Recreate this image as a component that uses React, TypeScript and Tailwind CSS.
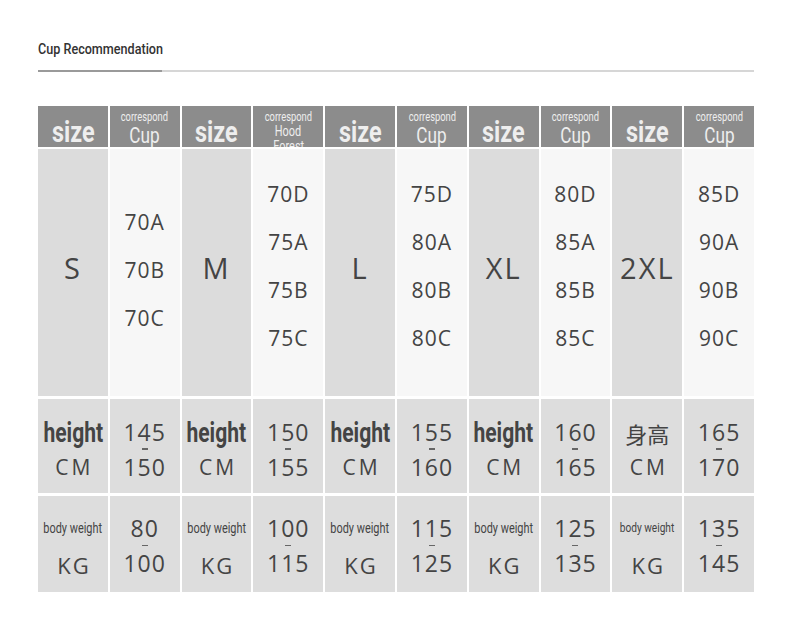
import React from 'react'

const roboto = '"Roboto", "Liberation Sans", sans-serif'
const plain = '"Open Sans", "Noto Sans", "Noto Sans CJK SC", sans-serif'

interface SizeGroup {
  size: string
  cupLabel: string[]
  cups: string[]
  heightLabel: string
  height: [string, string]
  weight: [string, string]
}

const groups: SizeGroup[] = [
  { size: 'S', cupLabel: ['Cup'], cups: ['70A', '70B', '70C'], heightLabel: 'height', height: ['145', '150'], weight: ['80', '100'] },
  { size: 'M', cupLabel: ['Hood', 'Forest'], cups: ['70D', '75A', '75B', '75C'], heightLabel: 'height', height: ['150', '155'], weight: ['100', '115'] },
  { size: 'L', cupLabel: ['Cup'], cups: ['75D', '80A', '80B', '80C'], heightLabel: 'height', height: ['155', '160'], weight: ['115', '125'] },
  { size: 'XL', cupLabel: ['Cup'], cups: ['80D', '85A', '85B', '85C'], heightLabel: 'height', height: ['160', '165'], weight: ['125', '135'] },
  { size: '2XL', cupLabel: ['Cup'], cups: ['85D', '90A', '90B', '90C'], heightLabel: '身高', height: ['165', '170'], weight: ['135', '145'] },
]

// condensed look: no narrow family installed, so squeeze Roboto horizontally
function Narrow({ className, children }: { className: string; children: React.ReactNode }) {
  return (
    <span className={`inline-block whitespace-nowrap scale-x-[0.78] ${className}`} style={{ fontFamily: roboto }}>
      {children}
    </span>
  )
}

function Range({ pair }: { pair: [string, string] }) {
  return (
    <div className="flex flex-col items-center text-[23px] leading-[24px] text-[#444] tracking-[1px]" style={{ fontFamily: plain }}>
      <span>{pair[0]}</span>
      <span className="h-[11px] flex items-center">
        <span className="block w-[6px] h-[1.5px] bg-[#666]" />
      </span>
      <span>{pair[1]}</span>
    </div>
  )
}

export default function App() {
  return (
    <div className="w-[790px] h-[634px] bg-white">
      <div className="pl-[38px] pr-[36px] pt-[39px]">
        <div className="h-[20px] flex items-center">
          <span
            className="inline-block origin-left scale-x-[0.84] text-[15px] font-medium text-[#333] whitespace-nowrap"
            style={{ fontFamily: roboto }}
          >
            Cup Recommendation
          </span>
        </div>
        <div className="mt-[11px] h-[2px] bg-[#d6d6d6] flex">
          <div className="h-[2px] w-[124px] bg-[#9a9a9a]" />
        </div>

        <div className="mt-[34px] grid grid-cols-10 gap-x-[2px] w-[716px]">
          {groups.map((g) => (
            <React.Fragment key={g.size}>
              <div className="h-[41px] bg-[#8c8c8c] flex items-end justify-center">
                <Narrow className="text-[30px] font-bold text-[#eeeeee] leading-[32px] translate-y-[1px]">size</Narrow>
              </div>
              <div className="h-[41px] bg-[#8c8c8c] overflow-hidden flex flex-col items-center pt-[4px] text-[#eeeeee]">
                <Narrow className="text-[12px] leading-[14px]">correspond</Narrow>
                {g.cupLabel.length === 1 ? (
                  <Narrow className="text-[22px] leading-[23px]">{g.cupLabel[0]}</Narrow>
                ) : (
                  g.cupLabel.map((t) => (
                    <Narrow key={t} className="text-[14px] leading-[15px]">{t}</Narrow>
                  ))
                )}
              </div>
            </React.Fragment>
          ))}

          {groups.map((g) => (
            <React.Fragment key={g.size}>
              <div className="mt-[2px] h-[247px] bg-[#dcdcdc] flex items-center justify-center pb-[9px]">
                <span className="text-[29px] text-[#444] tracking-[2px]" style={{ fontFamily: plain }}>{g.size}</span>
              </div>
              <div
                className={`mt-[2px] h-[247px] bg-[#f7f7f7] flex flex-col items-center justify-center gap-[20px] ${
                  g.cups.length === 3 ? 'pb-[6px]' : 'pb-[14px]'
                }`}
              >
                {g.cups.map((c) => (
                  <span key={c} className="text-[21px] leading-[28px] text-[#444] tracking-[1px]" style={{ fontFamily: plain }}>
                    {c}
                  </span>
                ))}
              </div>
            </React.Fragment>
          ))}

          {groups.map((g) => (
            <React.Fragment key={g.size}>
              <div className="mt-[3px] h-[94px] bg-[#dddddd] flex flex-col items-center justify-center gap-[9px] pt-[6px]">
                {g.heightLabel === '身高' ? (
                  <span className="text-[22px] leading-[26px] text-[#444]" style={{ fontFamily: '"Noto Sans CJK SC", sans-serif' }}>身高</span>
                ) : (
                  <Narrow className="text-[27px] leading-[26px] font-bold text-[#444]">height</Narrow>
                )}
                <span className="text-[21px] leading-[24px] text-[#444] tracking-[3px] pl-[3px]" style={{ fontFamily: plain }}>CM</span>
              </div>
              <div className="mt-[3px] h-[94px] bg-[#dddddd] flex items-center justify-center pt-[6px]">
                <Range pair={g.height} />
              </div>
            </React.Fragment>
          ))}

          {groups.map((g, i) => (
            <React.Fragment key={g.size}>
              <div className="mt-[3px] h-[96px] bg-[#dddddd] flex flex-col items-center justify-center gap-[17px] pt-[9px]">
                <Narrow className={`${i === 4 ? 'text-[13px]' : 'text-[14px]'} leading-[16px] text-[#444]`}>body weight</Narrow>
                <span className="text-[22px] leading-[24px] text-[#444] tracking-[2px] pl-[2px]" style={{ fontFamily: plain }}>KG</span>
              </div>
              <div className="mt-[3px] h-[96px] bg-[#dddddd] flex items-center justify-center pt-[3px]">
                <Range pair={g.weight} />
              </div>
            </React.Fragment>
          ))}
        </div>
      </div>
    </div>
  )
}
